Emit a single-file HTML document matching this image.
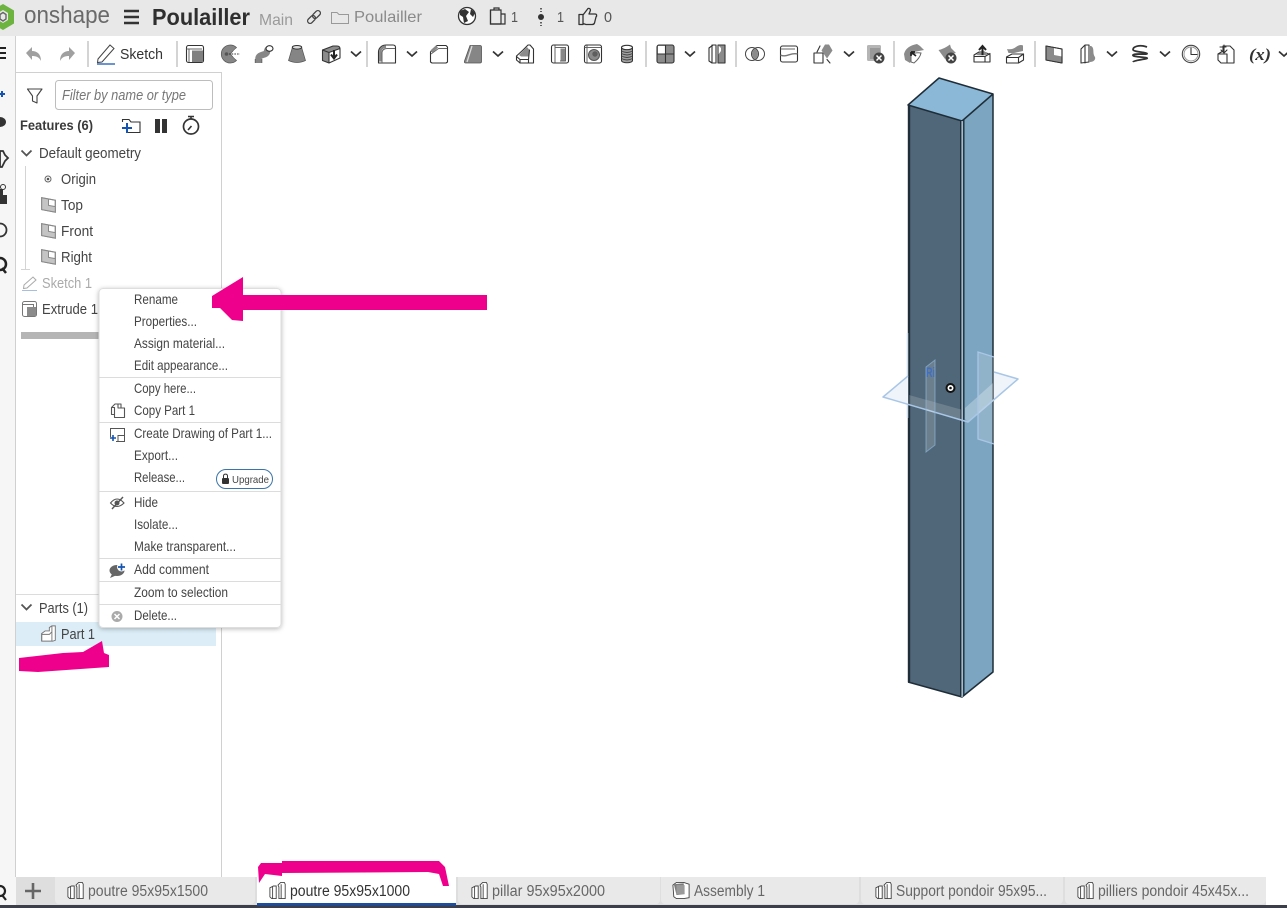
<!DOCTYPE html>
<html><head><meta charset="utf-8"><title>Onshape</title>
<style>
html,body{margin:0;padding:0;background:#fff;width:1287px;height:908px;overflow:hidden}
svg{display:block;position:absolute;left:0;top:0}
text{font-family:"Liberation Sans",sans-serif;font-size:14.5px;fill:#444}
.m{font-size:14px;fill:#444}
.t{font-size:15.5px;fill:#666}
.s{fill:none;stroke:#333;stroke-width:1.1;stroke-linejoin:round;stroke-linecap:round}
.l{fill:none;stroke:#666;stroke-width:1;stroke-linejoin:round}
.g{fill:#8b8b8b;stroke:none}
.f{fill:#fff;stroke:#333;stroke-width:1.1;stroke-linejoin:round}
.d{fill:#333;stroke:none}
.c{fill:none;stroke:#333;stroke-width:1.7}
.sep{stroke:#d4d4d4;stroke-width:2}
.ml{stroke:#dcdcdc;stroke-width:1}
</style></head><body>
<svg width="1287" height="908" viewBox="0 0 1287 908" xmlns="http://www.w3.org/2000/svg">
<defs>
<filter id="sh" x="-10%" y="-5%" width="120%" height="110%"><feDropShadow dx="0" dy="1" stdDeviation="2.5" flood-color="#000" flood-opacity=".28"/></filter>
<symbol id="extrude" viewBox="0 0 20 20"><rect x="1.500" y="1.500" width="17" height="17" rx="2" class="f"/><path d="M1.500 5H12" class="l"/><rect x="7" y="6.500" width="11" height="11.500" fill="#808080"/><path d="M4 5V18M4 5H17" class="l"/></symbol>
<symbol id="revolve" viewBox="0 0 20 20"><path d="M16.500 3.500A9 9 0 1 0 16.500 16.500L11.500 11.500A2 2 0 0 1 11.500 8.500Z" fill="#868686" stroke="#555" stroke-width=".7"/><circle cx="6.500" cy="10" r="1.800" fill="#555"/><path d="M9 10H20" stroke="#333" stroke-dasharray="1.500 1.200"/><path d="M13.500 7.500L16 5M13.500 12.500L16 15" stroke="#fff" stroke-width="1"/></symbol>
<symbol id="sweep" viewBox="0 0 20 20"><path d="M4.500 19V15C4.500 9.500 12.500 12 13 7.500Q13.500 5 15.500 4.500" fill="none" stroke="#868686" stroke-width="6.500"/><ellipse cx="15.500" cy="4.500" rx="3.500" ry="2.800" class="f"/><path d="M1.300 15V19M7.800 15V19" class="l"/></symbol>
<symbol id="loft" viewBox="0 0 20 20"><path d="M5.500 3H14.500L18.500 16.500Q10 20.500 1.500 16.500Z" fill="#858585" stroke="#555" stroke-width=".7"/><ellipse cx="10" cy="3.300" rx="4.700" ry="1.800" fill="#ddd" stroke="#333"/></symbol>
<symbol id="thicken" viewBox="0 0 20 20"><path d="M1.500 6L12 2H16Q19 2 19 5V14L8 19 1.500 16.500Z" fill="#8b8b8b"/><path d="M8 8.500L19 4.500V14L8 19Z" fill="#fff"/><path d="M1.500 6L12 2H16Q19 2 19 5V14L8 19 1.500 16.500ZM1.500 6L8 8.500 19 4.500M8 8.500V19" class="s"/><path d="M13 6V14M10 10.500L13 14.500 16 10.500" fill="none" stroke="#222" stroke-width="2"/></symbol>
<symbol id="fillet" viewBox="0 0 20 20"><path d="M1.500 19V8C1.500 4 5 1 9 1H16C17.500 1 18.500 2 18.500 3.500V19Z" class="f"/><path d="M3.300 17.500V8C3.300 5 5.500 3 9 2.600" fill="none" stroke="#888" stroke-width="2.500"/><path d="M5 19V8.500C5 6 7.500 4.500 10 4.500H18" class="l"/></symbol>
<symbol id="chamfer" viewBox="0 0 20 20"><path d="M1.500 18V8L8 1.500H17L18.500 3V18L17 19H3Z" class="f"/><path d="M2.500 7.500L8 2.500" fill="none" stroke="#888" stroke-width="3"/><path d="M2 10L9.500 4.500H18" class="l"/></symbol>
<symbol id="draft" viewBox="0 0 20 20"><path d="M7 1.500H17Q18.500 1.500 18.500 3V17.500Q18.500 19 17 19H2.500Q1 19 1.500 17Z" fill="#868686" stroke="#555" stroke-width=".8"/><path d="M9 2L4 18" stroke="#ddd" stroke-width="1.300"/></symbol>
<symbol id="rib" viewBox="0 0 20 20"><path d="M1.500 12L8 6 13 1H15L18.500 5V19H5L1.500 16Z" class="f"/><path d="M4 11L12 3 14.500 6 13.500 12.500H6Z" fill="#8b8b8b"/><path d="M1.500 12.500L5 15.500H13.500V19M13.500 15.500L14.500 6M5 15.500V19" class="s"/></symbol>
<symbol id="shell" viewBox="0 0 20 20"><rect x="1.500" y="1" width="17" height="18" rx="2" class="f"/><path d="M5 1.500V18.500M5 3.500H15.500V17H10" class="l"/><rect x="10.500" y="4.500" width="4.500" height="12" fill="#888"/></symbol>
<symbol id="hole" viewBox="0 0 20 20"><rect x="1.500" y="1" width="17" height="18" rx="2" class="f"/><path d="M4 1.500V18.500M1.500 3.500H18.500" class="l"/><circle cx="11" cy="11" r="5.500" fill="#8a8a8a" stroke="#555"/><circle cx="12" cy="10" r="2.700" fill="#5e5e5e"/></symbol>
<symbol id="cyl" viewBox="0 0 20 20"><path d="M4.500 3.500V16.500C4.500 19.500 15.500 19.500 15.500 16.500V3.500Z" fill="#a0a0a0" stroke="#333"/><ellipse cx="10" cy="3.500" rx="5.500" ry="2.200" class="f"/><path d="M4.500 7Q10 10 15.500 7M4.500 9.500Q10 12.500 15.500 9.500M4.500 12Q10 15 15.500 12M4.500 14.500Q10 17.500 15.500 14.500" fill="none" stroke="#444" stroke-width=".9"/></symbol>
<symbol id="pattern" viewBox="0 0 20 20"><rect x="2" y="1" width="17" height="18" rx="2" class="g"/><rect x="3" y="2" width="7" height="8" fill="#fff"/><path d="M10.500 1V19M2 10H19" stroke="#333" stroke-width="1.100"/><rect x="2" y="1" width="17" height="18" rx="2" class="s"/></symbol>
<symbol id="mirror" viewBox="0 0 20 20"><path d="M2 4L6 1H9V19H5L2 17Z" class="f"/><path d="M11 1H18V19H11V11L14 7V4Z" class="g"/><path d="M5 1V19M11 1V19H18V1Z" class="s"/></symbol>
<symbol id="bool" viewBox="0 0 20 20"><circle cx="7" cy="10" r="6.500" class="l" style="stroke:#444"/><circle cx="13" cy="10" r="6.500" class="l" style="stroke:#444"/><path d="M10 4.500A6.500 6.500 0 0 1 10 15.500A6.500 6.500 0 0 1 10 4.500Z" class="g"/></symbol>
<symbol id="split" viewBox="0 0 20 20"><rect x="1.500" y="2" width="17" height="16" rx="2" class="f"/><path d="M1.500 5H16" class="l"/><path d="M1.500 11C7 14 12 8 18.500 10" style="fill:none;stroke:#777;stroke-width:1.400"/></symbol>
<symbol id="xform" viewBox="0 0 20 20"><rect x="1" y="9" width="9" height="10" class="f"/><path d="M12 0.500L16 0.500 19.500 6.500 14 14.500 8.500 6.500Z" class="g"/><path d="M4 8L7 2M14 15.500L17 19" class="s" stroke-width="1.500"/></symbol>
<symbol id="delpart" viewBox="0 0 20 20"><rect x="2" y="1" width="14" height="16" rx="1.500" fill="#b5b5b5"/><rect x="5" y="4" width="10" height="11" fill="#999"/><circle cx="14" cy="14" r="5.500" fill="#444"/><path d="M11.500 11.500L16.500 16.500M16.500 11.500L11.500 16.500" stroke="#fff" stroke-width="1.500"/></symbol>
<symbol id="modface" viewBox="0 0 22 22"><path d="M1 11Q3 3 14 1L17 3 21 7 11 9 7 20 2 17Z" fill="#8b8b8b"/><path d="M8 12Q12 9 18 10Q17 15 11 20L8 19Z" fill="#fff" stroke="#666"/><path d="M8 9L13 13M8 9H12M8 9V13" fill="none" stroke="#222" stroke-width="1.700"/></symbol>
<symbol id="delface" viewBox="0 0 20 20"><path d="M0.500 6Q6 5 12 0.500L13 4 18 9 11 10 7 15Z" fill="#8b8b8b"/><circle cx="13" cy="14" r="5.500" fill="#444"/><path d="M10.500 11.500L15.500 16.500M15.500 11.500L10.500 16.500" stroke="#fff" stroke-width="1.500"/></symbol>
<symbol id="moveup" viewBox="0 0 20 20"><path d="M2 11L7 8H12L18 10.500V18H2Z" class="f"/><path d="M2 12.500H13V18M13 12.500L18 9.500" class="s"/><path d="M4 11L8 8H14L16 10.500 11 11.500Z" fill="#8b8b8b"/><path d="M10.500 11V3M7 6L10.500 2 14 6" fill="none" stroke="#222" stroke-width="2"/></symbol>
<symbol id="repl" viewBox="0 0 20 20"><path d="M2 5Q7 6 11 3T18 1.500V7L9 9 3.500 9Z" fill="#8b8b8b"/><path d="M1.500 13L7 10H18.500V16L13.500 19H1.500Z" class="f"/><path d="M1.500 13.500H13.500V19M13.500 13.500L18.500 10" class="s"/></symbol>
<symbol id="plane" viewBox="0 0 20 20"><path d="M2 2L18 5V19L2 16Z" class="f"/><path d="M2 2L10 3.500V11L18 12.500V19L2 16Z" class="g"/><path d="M2 2L18 5V19L2 16Z" class="s"/></symbol>
<symbol id="wrap" viewBox="0 0 20 20"><path d="M3 5L7 1H11V18L3 19Z" class="f"/><path d="M13 2C17 4 14 9 17 13C18 16 15 18 12 18V2Z" class="g"/><path d="M7 1.500V19" class="s"/></symbol>
<symbol id="helix" viewBox="0 0 20 20"><path d="M17 3C9 0 3 3 3 5.500S16 8 17 9.500 4 9 3 11 15 13 17 14 4 16 3 18" style="fill:none;stroke:#333;stroke-width:1.800"/></symbol>
<symbol id="clock" viewBox="0 0 20 20"><circle cx="10" cy="10" r="8.700" class="s" style="stroke:#444"/><circle cx="10" cy="10" r="7" class="l" style="stroke:#999"/><path d="M10 4V10.500H16" class="s"/></symbol>
<symbol id="insert" viewBox="0 0 20 20"><path d="M2 10L7 7V2H14L18 6V19H5L2 16Z" class="f"/><path d="M2 10H11V19" class="s"/><path d="M4 3H10M8 1V8M5 6L8 9 11 6" class="s" stroke-width="1.700"/></symbol>
<symbol id="partstud" viewBox="0 0 20 20"><path d="M1 7L5 5H8V19H3L1 17Z" fill="#fff" stroke="#444"/><path d="M10 4L13 1H17L18 3V19H11V6Z" fill="#fff" stroke="#444"/><path d="M4 5.500V19M13.500 3V19" stroke="#444" fill="none"/></symbol>
<symbol id="asm" viewBox="0 0 20 20"><path d="M1 4L5 1H13L19 3V18L13 19H5L2 17Z" fill="#fff" stroke="#444"/><path d="M2 3L13 2 14 14 5 15Z" fill="#7d7d7d"/><path d="M5 4H14V14H5Z" fill="#9a9a9a"/></symbol>
<symbol id="planeS" viewBox="0 0 20 20"><path d="M2 2L18 5V19L2 16Z" fill="#fff" stroke="#888" stroke-width="1.300"/><path d="M2 2L10 3.500V11L18 12.500V19L2 16Z" fill="#c4c4c4"/><path d="M2 2L18 5V19L2 16ZM10 3.500V11L18 12.500" fill="none" stroke="#888" stroke-width="1.200"/></symbol>
<symbol id="part" viewBox="0 0 20 20"><path d="M2 10L6 7H11V3L14 1H18V18L15 19H2Z" fill="#fff" stroke="#777" stroke-width="1.100"/><path d="M2 10V19M6 11H2M6 11H11L14 8V1M14 8V19" fill="none" stroke="#777" stroke-width="1.100"/></symbol>
</defs>

<!-- backgrounds -->
<rect x="0" y="0" width="1287" height="36" fill="#e8e8e8"/>
<rect x="0" y="36" width="16" height="841" fill="#f6f6f6"/>
<path d="M15.500 36V877M16 72.500H221.500V877" fill="none" stroke="#d0d0d0"/>

<!-- logo -->
<path d="M3 4L14 10.500V23.500L3 30-8 23.500V10.500Z" fill="#6db33f"/>
<path d="M3 10L8 13V20L3 23-2 20V13Z" fill="#e8e8e8"/>
<path d="M3 12.500L6 14.500V19L3 21 0 19V14.500Z" fill="none" stroke="#666" stroke-width="1.400"/>
<text x="24" y="23" textLength="86" lengthAdjust="spacingAndGlyphs" style="font-size:24px;fill:#6a6a6a">onshape</text>
<path d="M124 11H139M124 17H139M124 23H139" stroke="#333" stroke-width="2.600"/>
<text x="152" y="25" textLength="98" lengthAdjust="spacingAndGlyphs" style="font-size:23px;font-weight:bold;fill:#2f2f2f">Poulailler</text>
<text x="259" y="25" textLength="34" lengthAdjust="spacingAndGlyphs" style="font-size:16px;fill:#9a9a9a">Main</text>
<g fill="none" stroke="#444" stroke-width="1.300" transform="rotate(-45 314 17)"><rect x="306" y="14.500" width="9" height="5" rx="2.500"/><rect x="313" y="14.500" width="9" height="5" rx="2.500"/></g>
<path d="M331.500 23.500V12.500H337L339 14.500H348.500V23.500Z" fill="none" stroke="#999"/>
<text x="354" y="22" textLength="68" lengthAdjust="spacingAndGlyphs" style="font-size:16px;fill:#8a8a8a">Poulailler</text>
<circle cx="467" cy="16" r="8.500" fill="#fff" stroke="#333" stroke-width="1.300"/>
<path d="M460 11L465 9 469 12 466 16 468 21 464 23 463 17 460 15ZM471 9L475 13 473 17 470 14Z" fill="#333"/>
<path d="M490.500 24V10H494V8H499V10H501V14H505V24ZM494 10H499M501 14V24" fill="none" stroke="#333" stroke-width="1.200"/>
<path d="M490.500 10V24H501" fill="none" stroke="#333" stroke-width="1.200"/>
<text x="511" y="22" textLength="7" lengthAdjust="spacingAndGlyphs" style="font-size:15px;fill:#555">1</text>
<circle cx="541" cy="17" r="3" fill="#333"/><path d="M541 8V12M541 22V26" stroke="#333" stroke-width="1.500" stroke-dasharray="1.500 1.500"/>
<text x="557" y="22" textLength="7" lengthAdjust="spacingAndGlyphs" style="font-size:15px;fill:#555">1</text>
<path d="M579 14.500H583V24.500H579ZM583 15L588 8.500C590 8 591 9.500 590 11.500L589 14H595C597 14 597 16 596 17L594.500 23C594 24.500 593 24.500 592 24.500H586L583 23.500" fill="none" stroke="#333" stroke-width="1.300" stroke-linejoin="round"/>
<text x="604" y="22" textLength="8" lengthAdjust="spacingAndGlyphs" style="font-size:15px;fill:#555">0</text>

<!-- left strip -->
<path d="M0 48H6M0 53H6M0 58H6" stroke="#222" stroke-width="2"/>
<path d="M0 94H5M2 91V97" stroke="#1554b0" stroke-width="2"/>
<ellipse cx="0" cy="122" rx="6" ry="5" fill="#333"/>
<path d="M0 151H3L5 155 8 158 5 161 2 167H0Z" fill="none" stroke="#333" stroke-width="1.800"/>
<path d="M0 189H3V195H7V204H0Z" fill="#333"/><circle cx="3" cy="187" r="2.500" fill="none" stroke="#333"/>
<circle cx="0" cy="230" r="6.500" fill="none" stroke="#333" stroke-width="1.800"/>
<circle cx="0" cy="264" r="6" fill="none" stroke="#222" stroke-width="2.500"/><path d="M2 268L6 273" stroke="#222" stroke-width="2.500"/>

<!-- toolbar -->
<g fill="#a0a0a0" stroke="none">
<path d="M26 53L32 47V51C37 51 41 54 41 61C39 57 36 56 32 56V60Z"/>
<path d="M75 53L69 47V51C64 51 60 54 60 61C62 57 65 56 69 56V60Z"/>
</g>
<path d="M88 41V67M177 41V67M367 41V67M646 41V67M736 41V67M894 41V67M1035 41V67" class="sep"/>
<path d="M98 59L110 45 114 48.500 102 62 97.500 62.500Z" fill="none" stroke="#444" stroke-width="1"/>
<path d="M97 64H115" stroke="#1554b0" stroke-width="1.300"/>
<text x="120" y="59" textLength="43" lengthAdjust="spacingAndGlyphs" style="fill:#333">Sketch</text>
<use href="#extrude" x="185" y="44" width="20" height="20"/>
<use href="#revolve" x="220" y="44" width="20" height="20"/>
<use href="#sweep" x="254" y="44" width="20" height="20"/>
<use href="#loft" x="287" y="44" width="20" height="20"/>
<use href="#thicken" x="321" y="44" width="20" height="20"/>
<use href="#fillet" x="377" y="44" width="20" height="20"/>
<use href="#chamfer" x="429" y="44" width="20" height="20"/>
<use href="#draft" x="463" y="44" width="20" height="20"/>
<use href="#rib" x="515" y="44" width="20" height="20"/>
<use href="#shell" x="550" y="44" width="20" height="20"/>
<use href="#hole" x="583" y="44" width="20" height="20"/>
<use href="#cyl" x="617" y="44" width="20" height="20"/>
<use href="#pattern" x="655" y="44" width="20" height="20"/>
<use href="#mirror" x="707" y="44" width="20" height="20"/>
<use href="#bool" x="745" y="44" width="20" height="20"/>
<use href="#split" x="779" y="44" width="20" height="20"/>
<use href="#xform" x="813" y="44" width="20" height="20"/>
<use href="#delpart" x="865" y="44" width="20" height="20"/>
<use href="#modface" x="903" y="43" width="22" height="22"/>
<use href="#delface" x="938" y="44" width="20" height="20"/>
<use href="#moveup" x="972" y="44" width="20" height="20"/>
<use href="#repl" x="1005" y="44" width="20" height="20"/>
<use href="#plane" x="1044" y="44" width="20" height="20"/>
<use href="#wrap" x="1078" y="44" width="20" height="20"/>
<use href="#helix" x="1130" y="44" width="20" height="20"/>
<use href="#clock" x="1181" y="44" width="20" height="20"/>
<use href="#insert" x="1216" y="44" width="20" height="20"/>
<text x="1249" y="60" textLength="22" lengthAdjust="spacingAndGlyphs" style="font-family:'Liberation Serif',serif;font-size:17px;font-weight:bold;font-style:italic;fill:#333">(x)</text>
<g class="c">
<path d="M351 51.500L356 56 361 51.500M407 51.500L412 56 417 51.500M493 51.500L498 56 503 51.500M685 51.500L690 56 695 51.500M844 51.500L849 56 854 51.500M1107 51.500L1112 56 1117 51.500M1160 51.500L1165 56 1170 51.500M1279 51.500L1284 56 1289 51.500"/>
</g>

<!-- feature panel -->
<path d="M27.500 89H42L37 96V103L32.500 101V96Z" fill="none" stroke="#444" stroke-width="1.100" stroke-linejoin="round"/>
<rect x="55.500" y="80.500" width="157" height="29" rx="3" fill="#fff" stroke="#bdbdbd"/>
<text x="62" y="100" textLength="124" lengthAdjust="spacingAndGlyphs" style="font-style:italic;fill:#777">Filter by name or type</text>
<text x="20" y="130" textLength="73" lengthAdjust="spacingAndGlyphs" style="font-weight:bold;font-size:14px;fill:#3a3a3a">Features (6)</text>
<path d="M122.500 122V119.500H129L131 122H140V132.500H128" fill="none" stroke="#333" stroke-width="1.100"/>
<path d="M122 128H132M127 123V133" stroke="#1554b0" stroke-width="2"/>
<path d="M155 119H160V133H155ZM162 119H167V133H162Z" fill="#333"/>
<circle cx="191" cy="126.500" r="7.500" fill="none" stroke="#333" stroke-width="1.700"/>
<path d="M188 116.500H194M191 117V119M188 130L191.500 126" stroke="#333" stroke-width="1.600" fill="none"/>

<path d="M21.500 150.500L26.500 155.500 31.500 150.500M21.500 604.500L26.500 609.500 31.500 604.500" fill="none" stroke="#555" stroke-width="1.800"/>
<text x="39" y="158" textLength="102" lengthAdjust="spacingAndGlyphs" style="fill:#444">Default geometry</text>
<path d="M25.500 166V269.500M21 269.500H30" stroke="#d4d4d4"/>
<circle cx="48" cy="179" r="3" fill="#fff" stroke="#666"/><circle cx="48" cy="179" r="1.300" fill="#555"/>
<text x="61" y="184" textLength="35" lengthAdjust="spacingAndGlyphs">Origin</text>
<use href="#planeS" x="40" y="196" width="17" height="17"/>
<text x="61" y="210" textLength="22" lengthAdjust="spacingAndGlyphs">Top</text>
<use href="#planeS" x="40" y="222" width="17" height="17"/>
<text x="61" y="236" textLength="32" lengthAdjust="spacingAndGlyphs">Front</text>
<use href="#planeS" x="40" y="248" width="17" height="17"/>
<text x="61" y="262" textLength="31" lengthAdjust="spacingAndGlyphs">Right</text>
<path d="M24 285L33 277 36 280 27 288 23.500 288.500Z" fill="none" stroke="#aaa"/>
<path d="M22 290.500H37" stroke="#a8bfdc"/>
<text x="42" y="288" textLength="50" lengthAdjust="spacingAndGlyphs" style="fill:#aaa">Sketch 1</text>
<rect x="22.500" y="301.500" width="14" height="15" rx="2" fill="#fff" stroke="#777"/>
<path d="M22.500 304.500H33.500V316" fill="none" stroke="#777"/>
<rect x="27" y="307" width="9" height="9" fill="#8b8b8b"/>
<text x="42" y="314" textLength="56" lengthAdjust="spacingAndGlyphs">Extrude 1</text>
<rect x="21" y="332" width="80" height="7" fill="#b5b5b5"/>
<path d="M16 594.500H100" stroke="#dcdcdc"/>
<text x="39" y="613" textLength="49" lengthAdjust="spacingAndGlyphs">Parts (1)</text>
<rect x="16" y="622" width="200" height="24" fill="#dcedf7"/>
<use href="#part" x="40" y="625" width="17" height="17"/>
<text x="61" y="639" textLength="34" lengthAdjust="spacingAndGlyphs">Part 1</text>

<!-- 3D body -->
<path d="M908 105L939 78 993 94 962 121Z" fill="#8ab8d6"/>
<path d="M908 105L962 121V697L908 682Z" fill="#4f6778"/>
<path d="M962 121L993 94V672L962 697Z" fill="#7ba5c0"/>
<path d="M909 105V682" stroke="#1f2d38" stroke-width="2.400"/>
<path d="M908 105L939 78 993 94 962 121ZM993 94V672L962 697 908 682" fill="none" stroke="#1f2d38" stroke-width="1.500" stroke-linejoin="round"/>
<path d="M962 121V697" stroke="#a9c4d4" stroke-width="1.600"/>
<path d="M960.700 121V696.500M963.800 119V695" stroke="#1f2d38" stroke-width="1.400"/>

<!-- planes -->
<path d="M907.500 333V418" stroke="#cfdeef" stroke-width="1.500"/>
<path d="M883 397L908 376V404Z" fill="#eef4fa"/>
<path d="M994 372L1018 379 994 400Z" fill="#eef4fa"/>
<path d="M909 395L961 409.500V420L909 404.500Z" fill="#fff" fill-opacity=".16"/>
<path d="M965 408L993 383V400.500L968 422 965 419Z" fill="#fff" fill-opacity=".28"/>
<path d="M994 372L1018 379 968 422 883 397 908 376" fill="none" stroke="#a9c6e6" stroke-width="1.500" stroke-linejoin="round"/>
<path d="M926 367L935 360V445L926 452Z" fill="#fff" fill-opacity=".16" stroke="#8fb3d6" stroke-opacity=".7"/>
<text x="926" y="377" textLength="9" lengthAdjust="spacingAndGlyphs" style="font-size:14px;font-weight:bold;fill:#3f6fc4">Ri</text>
<path d="M978 352L994 357V444L978 439Z" fill="#fff" fill-opacity=".16"/>
<path d="M994 357L978 352V439L994 444" fill="none" stroke="#a9c6e6" stroke-width="1.300"/>
<circle cx="950.500" cy="388" r="5" fill="#111"/><circle cx="950.500" cy="388" r="3" fill="#fff"/><circle cx="950.500" cy="388" r="1.300" fill="#111"/>

<!-- tab bar -->
<rect x="16" y="877" width="1271" height="29" fill="#fff"/>
<rect x="16" y="877" width="1250" height="28" fill="#dedede"/>
<rect x="0" y="877" width="16" height="29" fill="#f6f6f6"/>
<path d="M0 906.500H1287" stroke="#3c3f4a" stroke-width="3"/>
<circle cx="0" cy="891" r="5" fill="none" stroke="#222" stroke-width="2.200"/><path d="M2 895L6 900" stroke="#222" stroke-width="2.200"/>
<path d="M25 891H41M33 883V899" stroke="#666" stroke-width="2.600"/>
<g fill="#e9e9e9">
<path d="M55 877H255V900a4 4 0 0 1-4 4H59a4 4 0 0 1-4-4Z"/>
<path d="M458 877H660V900a4 4 0 0 1-4 4H462a4 4 0 0 1-4-4Z"/>
<path d="M661 877H859V900a4 4 0 0 1-4 4H665a4 4 0 0 1-4-4Z"/>
<path d="M861 877H1063V900a4 4 0 0 1-4 4H865a4 4 0 0 1-4-4Z"/>
<path d="M1065 877H1266V900a4 4 0 0 1-4 4H1069a4 4 0 0 1-4-4Z"/>
</g>
<rect x="257" y="877" width="199" height="28" fill="#fff"/>
<rect x="257" y="903" width="199" height="2.500" fill="#1a4fa8"/>
<use href="#partstud" x="67" y="881" width="18" height="19"/>
<use href="#partstud" x="269" y="881" width="18" height="19"/>
<use href="#partstud" x="471" y="881" width="18" height="19"/>
<use href="#asm" x="672" y="881" width="18" height="19"/>
<use href="#partstud" x="875" y="881" width="18" height="19"/>
<use href="#partstud" x="1077" y="881" width="18" height="19"/>
<text class="t" x="88" y="896" textLength="120" lengthAdjust="spacingAndGlyphs">poutre 95x95x1500</text>
<text class="t" x="290" y="896" textLength="120" lengthAdjust="spacingAndGlyphs" style="fill:#333">poutre 95x95x1000</text>
<text class="t" x="492" y="896" textLength="113" lengthAdjust="spacingAndGlyphs">pillar 95x95x2000</text>
<text class="t" x="694" y="896" textLength="71" lengthAdjust="spacingAndGlyphs">Assembly 1</text>
<text class="t" x="896" y="896" textLength="151" lengthAdjust="spacingAndGlyphs">Support pondoir 95x95...</text>
<text class="t" x="1098" y="896" textLength="151" lengthAdjust="spacingAndGlyphs">pilliers pondoir 45x45x...</text>

<!-- context menu -->
<rect x="99" y="288.500" width="182" height="339" rx="4" fill="#fff" stroke="#dedede" filter="url(#sh)"/>
<path d="M99 377.500H281M99 422.500H281M99 491.500H281M99 558.500H281M99 581.500H281M99 604.500H281" class="ml"/>
<text class="m" x="134" y="304" textLength="44" lengthAdjust="spacingAndGlyphs">Rename</text>
<text class="m" x="134" y="326" textLength="63" lengthAdjust="spacingAndGlyphs">Properties...</text>
<text class="m" x="134" y="348" textLength="91" lengthAdjust="spacingAndGlyphs">Assign material...</text>
<text class="m" x="134" y="370" textLength="94" lengthAdjust="spacingAndGlyphs">Edit appearance...</text>
<text class="m" x="134" y="393" textLength="62" lengthAdjust="spacingAndGlyphs">Copy here...</text>
<text class="m" x="134" y="415" textLength="61" lengthAdjust="spacingAndGlyphs">Copy Part 1</text>
<text class="m" x="134" y="438" textLength="138" lengthAdjust="spacingAndGlyphs">Create Drawing of Part 1...</text>
<text class="m" x="134" y="460" textLength="44" lengthAdjust="spacingAndGlyphs">Export...</text>
<text class="m" x="134" y="482" textLength="51" lengthAdjust="spacingAndGlyphs">Release...</text>
<text class="m" x="134" y="507" textLength="24" lengthAdjust="spacingAndGlyphs">Hide</text>
<text class="m" x="134" y="529" textLength="44" lengthAdjust="spacingAndGlyphs">Isolate...</text>
<text class="m" x="134" y="551" textLength="102" lengthAdjust="spacingAndGlyphs">Make transparent...</text>
<text class="m" x="134" y="574" textLength="75" lengthAdjust="spacingAndGlyphs">Add comment</text>
<text class="m" x="134" y="597" textLength="94" lengthAdjust="spacingAndGlyphs">Zoom to selection</text>
<text class="m" x="134" y="620" textLength="43" lengthAdjust="spacingAndGlyphs">Delete...</text>
<!-- menu icons -->
<path d="M111.500 407.500L115 404H121V408H124.500V417.500H114.500V407.500ZM118 404.500V408H121M114.500 407.500H111.500V414.500H114.500" fill="none" stroke="#555" stroke-width="1.100" stroke-linejoin="round"/>
<path d="M110.500 437V428.500H124.500V441.500H116" fill="none" stroke="#555" stroke-width="1"/>
<path d="M118 441.500V435.500H124.500" fill="none" stroke="#555" stroke-width="1"/>
<path d="M110 438H116M113 435V441" stroke="#1554b0" stroke-width="1.600"/>
<path d="M110.500 503Q117 495 124 503Q117 510 110.500 503Z" fill="none" stroke="#555" stroke-width="1.100"/>
<circle cx="117" cy="503" r="2.500" fill="#555"/>
<path d="M112 509L123 497" stroke="#555" stroke-width="1.400"/>
<ellipse cx="117" cy="570.500" rx="7.500" ry="5.500" fill="#666"/>
<path d="M112 574L110 578 117 575Z" fill="#666"/>
<circle cx="121.500" cy="567" r="4.500" fill="#fff"/>
<path d="M118 567H125M121.500 563.500V570.500" stroke="#1554b0" stroke-width="1.700"/>
<circle cx="117" cy="616.500" r="5.500" fill="#aaa"/>
<path d="M114.500 614L119.500 619M119.500 614L114.500 619" stroke="#fff" stroke-width="1.500"/>
<rect x="216.500" y="469.500" width="56" height="19" rx="9.500" fill="#fff" stroke="#3a74a8"/>
<rect x="222" y="478" width="7" height="6" rx="1" fill="#333"/>
<path d="M223.500 478V476C223.500 473.500 227.500 473.500 227.500 476V478" fill="none" stroke="#333"/>
<text x="232" y="483" textLength="37" lengthAdjust="spacingAndGlyphs" style="font-size:10.500px;fill:#444">Upgrade</text>

<!-- pink annotations -->
<g fill="#ee008c">
<path d="M212 296L243 277V295H487V310H243V321L232 320 220 308H212Z"/>
<path d="M19 658L63 653 83 652 102 641 104 653 109 655V667L38 672 19 671Z"/>
<path d="M258 867L261 863 282 863 282 861H439L445 867 449 886 443 886 439 874 428 872 282 873V876L265 874 259 883Z"/>
</g>
</svg>
</body></html>
